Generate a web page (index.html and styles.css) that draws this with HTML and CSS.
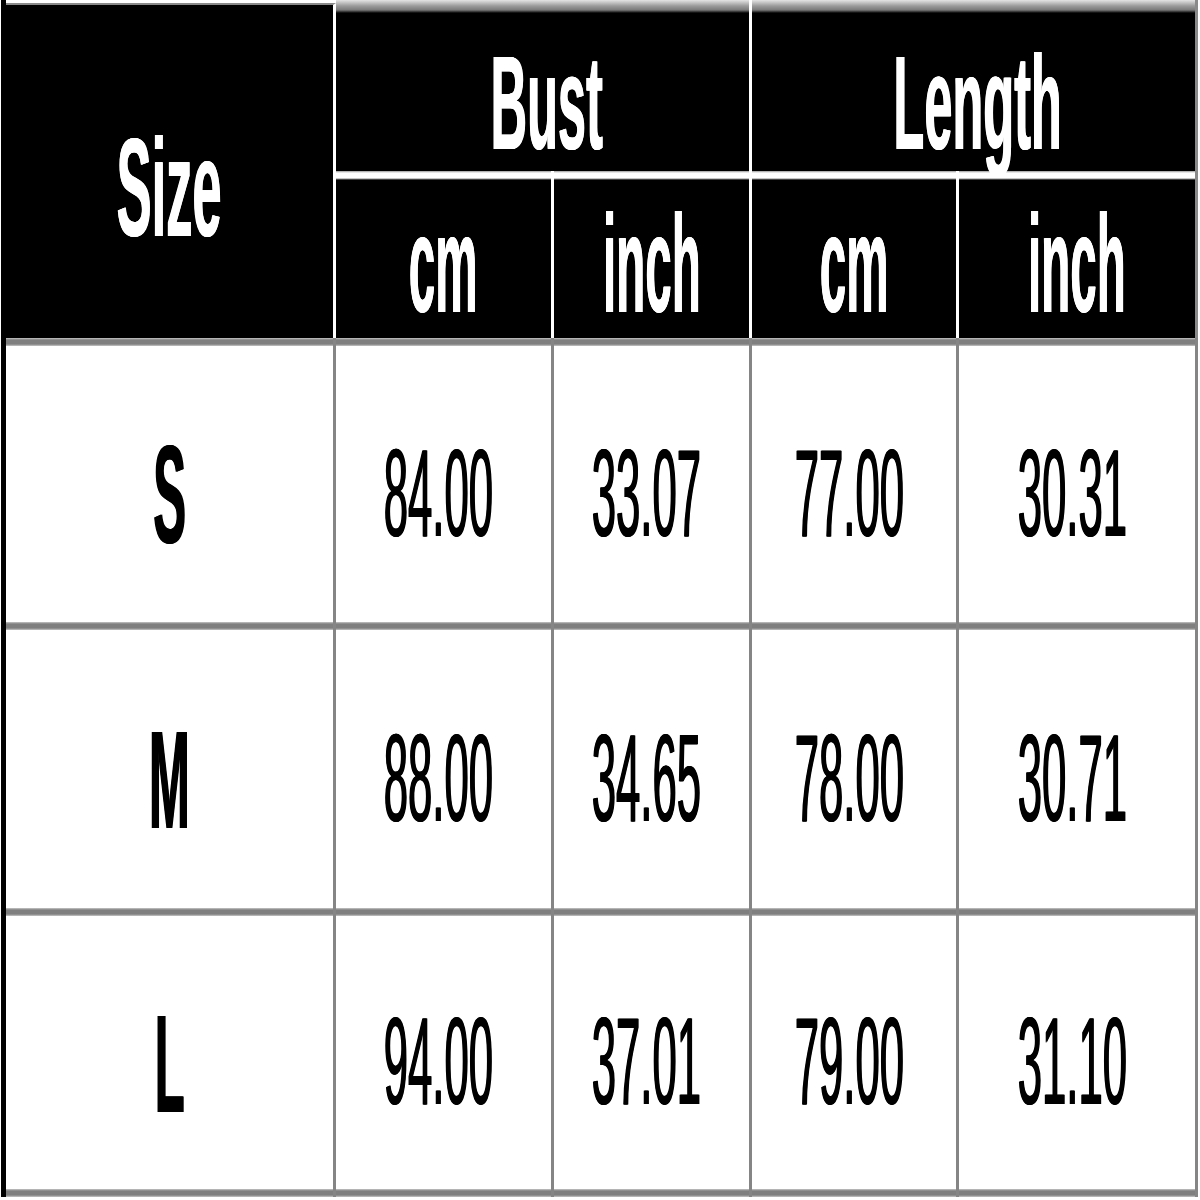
FILE: index.html
```html
<!DOCTYPE html>
<html lang="en">
<head>
<meta charset="utf-8">
<title>Size Chart</title>
<link rel="stylesheet" href="styles.css">
</head>
<body>
<div class="chart">
  <div class="h size-h"><span class="t t-size">Size</span></div>
  <div class="h group"><span class="t t-group">Bust</span></div>
  <div class="h group last"><span class="t t-group">Length</span></div>
  <div class="h unit"><span class="t t-unit">cm</span></div>
  <div class="h unit"><span class="t t-unit">inch</span></div>
  <div class="h unit"><span class="t t-unit">cm</span></div>
  <div class="h unit last"><span class="t t-unit">inch</span></div>

  <div class="c lbl"><span class="t t-lbl">S</span></div>
  <div class="c num"><span class="t t-num">84.00</span></div>
  <div class="c num"><span class="t t-num">33.07</span></div>
  <div class="c num"><span class="t t-num">77.00</span></div>
  <div class="c num"><span class="t t-num">30.31</span></div>

  <div class="c lbl"><span class="t t-lbl">M</span></div>
  <div class="c num"><span class="t t-num">88.00</span></div>
  <div class="c num"><span class="t t-num">34.65</span></div>
  <div class="c num"><span class="t t-num">78.00</span></div>
  <div class="c num"><span class="t t-num">30.71</span></div>

  <div class="c lbl end"><span class="t t-lbl">L</span></div>
  <div class="c num end"><span class="t t-num">94.00</span></div>
  <div class="c num end"><span class="t t-num">37.01</span></div>
  <div class="c num end"><span class="t t-num">79.00</span></div>
  <div class="c num end"><span class="t t-num">31.10</span></div>
</div>
</body>
</html>
```
FILE: styles.css
```css
html, body {
  margin: 0;
  padding: 0;
  background: #fff;
}

.chart {
  margin-left: 1px;
  border-left: 5px solid #000;
  width: 1192px;
  display: grid;
  grid-template-columns: 330px 218px 198px 207px 239px;
  grid-template-rows: 171px 167px 284px 286px 289px;
  font-family: "Liberation Sans", Arial, sans-serif;
}

.h, .c {
  display: flex;
  align-items: center;
  justify-content: center;
  overflow: visible;
  min-width: 0;
  box-sizing: border-box;
}

.t {
  display: inline-block;
  white-space: nowrap;
  line-height: 1;
  transform-origin: 50% 50%;
}

/* header */
.h {
  background-color: #000;
  color: #fff;
  border-right: 3px solid #fff;
}
.h.last {
  border-right-color: #8a8a8a;
}

.size-h {
  grid-row: span 2;
  margin-top: 3px;
  border-top: 2px solid #8a8a8a;
  padding-top: 33px;
}

.group {
  grid-column: span 2;
  padding-top: 36px;
  padding-left: 8px;
  background-image: linear-gradient(to bottom, #e4e4e4 0, #9a9a9a 6px, #7a7a7a 10px, #000 13px);
}

.unit {
  padding-top: 19px;
  background-image: linear-gradient(to bottom, #9a9a9a 0, #fff 2px, #fff 7px, #8a8a8a 8px, #000 9px);
}

.t-size {
  font-size: 140px;
  font-weight: 700;
  transform: scaleX(0.375);
  text-shadow: 1px 0 0 #fff, -1px 0 0 #fff;
}
.t-group {
  font-size: 133px;
  font-weight: 700;
  transform: scaleX(0.38);
  text-shadow: 1px 0 0 #fff, -1px 0 0 #fff;
}
.t-unit {
  font-size: 140px;
  font-weight: 700;
  transform: scaleX(0.34);
  text-shadow: 1px 0 0 #fff, -1px 0 0 #fff;
}

/* body */
.c {
  color: #000;
  border-right: 3px solid #858585;
  padding-top: 24px;
  background-image: linear-gradient(to bottom, #c6c6c6 0, #7f7f7f 2px, #7f7f7f 6px, #c6c6c6 8px, #fff 8px);
}
.c.end {
  padding-bottom: 8px;
  background-image: linear-gradient(to bottom, #c6c6c6 0, #7f7f7f 2px, #7f7f7f 6px, #c6c6c6 8px, #fff 8px, #fff calc(100% - 8px), #c6c6c6 calc(100% - 8px), #7f7f7f calc(100% - 6px), #7f7f7f calc(100% - 2px), #c6c6c6 100%);
}
.lbl {
  padding-top: 30px;
}
.c.lbl.end {
  padding-top: 30px;
}
.num {
  padding-right: 10px;
}

.t-lbl {
  font-size: 140px;
  font-weight: 700;
  transform: scaleX(0.35);
  text-shadow: 1.5px 0 0 #000, -1.5px 0 0 #000;
}
.t-num {
  font-size: 125px;
  font-weight: 400;
  transform: scaleX(0.35);
  text-shadow: 1.5px 0 0 #000, -1.5px 0 0 #000;
}
```
